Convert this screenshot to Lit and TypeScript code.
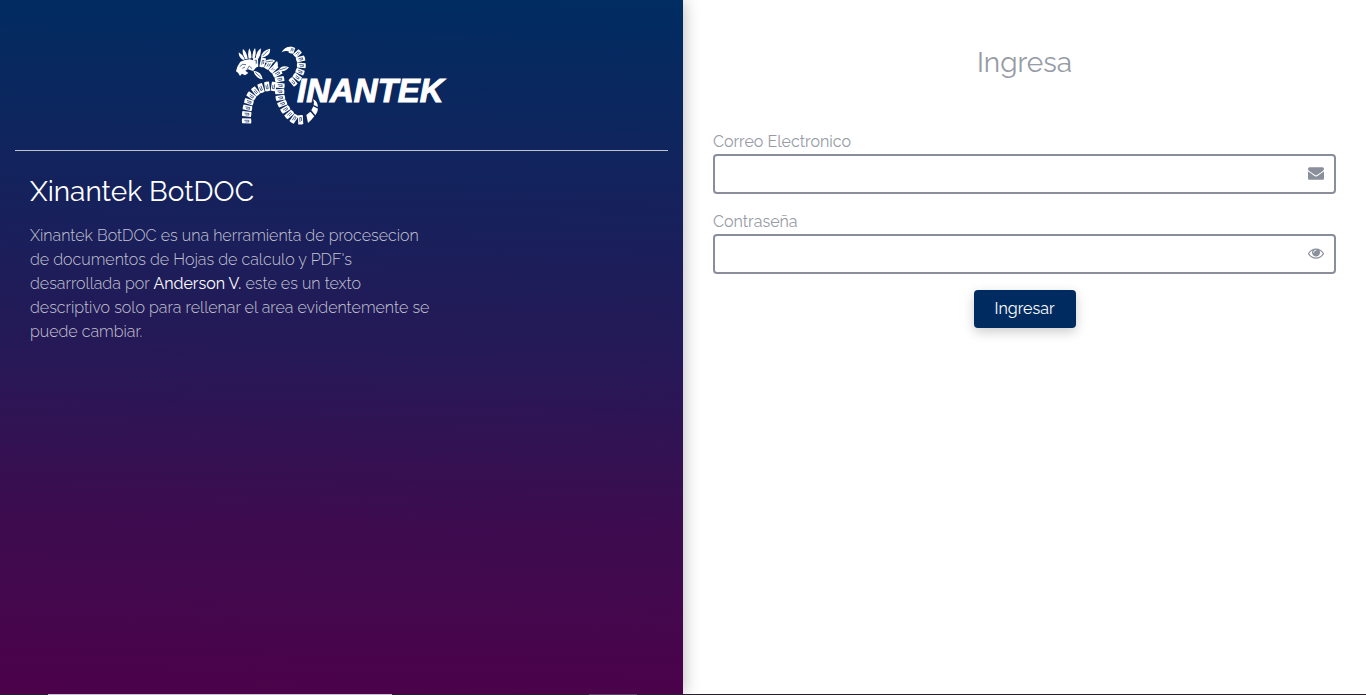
import { LitElement, html, svg, css } from "lit";
import { customElement, state } from "lit/decorators.js";

type Point = [number, number];

/** Spine of each part of the serpent, as points along its middle line. */
const TAIL: Point[] = [[190, 29], [206, 34], [221, 50], [226, 76], [219, 102], [205, 122], [186, 138]];
const NECK: Point[] = [[82, 68], [112, 68], [138, 82], [155, 102], [162, 126], [161, 154], [166, 184], [182, 214], [208, 238], [236, 238]];
const LEG: Point[] = [[150, 140], [126, 139], [97, 148], [76, 168], [66, 196], [62, 224], [62, 256]];

function spline(points: Point[], step = 1): Point[] {
  const out: Point[] = [];
  for (let i = 0; i < points.length - 1; i++) {
    const p0 = points[Math.max(i - 1, 0)];
    const p1 = points[i];
    const p2 = points[i + 1];
    const p3 = points[Math.min(i + 2, points.length - 1)];
    const n = Math.ceil(Math.hypot(p2[0] - p1[0], p2[1] - p1[1]) / step);
    for (let k = 0; k < n; k++) {
      const t = k / n;
      const at = (d: 0 | 1) =>
        0.5 * (2 * p1[d] + (p2[d] - p0[d]) * t + (2 * p0[d] - 5 * p1[d] + 4 * p2[d] - p3[d]) * t * t +
          (3 * p1[d] - p0[d] - 3 * p2[d] + p3[d]) * t * t * t);
      out.push([at(0), at(1)]);
    }
  }
  return out;
}

/** Scales set along a spine; width(t) gives their size from start to end. */
function scales(points: Point[], width: (t: number) => number) {
  const line = spline(points);
  const parts = [];
  for (let i = 9; i < line.length - 2; i += 19) {
    const a = line[Math.max(i - 5, 0)];
    const b = line[Math.min(i + 5, line.length - 1)];
    const angle = (Math.atan2(b[1] - a[1], b[0] - a[0]) * 180) / Math.PI;
    const w = width(i / line.length);
    parts.push(svg`<g transform="translate(${line[i][0].toFixed(1)} ${line[i][1].toFixed(1)}) rotate(${angle.toFixed(1)}) scale(1 ${w.toFixed(2)})">
      <path class="scale" d="M-7-14Q0-16 8-14L7 14Q0 16-8 14Z"/>
      <path class="groove" d="M-2 7V-7H3V4"/>
    </g>`);
  }
  return parts;
}

@customElement("brand-logo")
export class BrandLogo extends LitElement {
  static styles = css`
    :host { display: block; }
    .logo { display: block; width: 212px; height: 81px; overflow: visible; }
    .scale, .plume { fill: #fff; }
    .groove { fill: none; stroke: #08275f; stroke-width: 2; }
    .word {
      font: italic 700 99px "Liberation Sans", Arial, sans-serif;
      fill: #fff; stroke: #fff; stroke-width: 3;
    }
  `;

  render() {
    return html`<svg class="logo" viewBox="30 18 636 243" role="img" aria-label="Xinantek">
      <path class="plume" d="M167 37Q174 20 194 20L193 36Q179 30 167 37Z"/>
      ${scales(TAIL, (t) => Math.min(0.9, 0.6 + t))}
      ${scales(LEG, () => 0.95)}
      ${scales(NECK, () => 0.95)}
      <path class="plume" d="M241 225 253 215 265 229Q256 241 246 249ZM256 211 262 199 276 206Q275 217 268 226ZM263 195Q266 187 261 178 274 182 276 201Z"/>
      <path class="plume" d="M30 94 34 80 43 65 57 60 71 58 87 62 91 82 81 93 66 88 58 92 67 99 57 106 48 101 42 108 36 98Z"/>
      <path class="plume" d="M51 60Q38 53 38 37 51 44 57 58ZM58 57Q47 42 51 27 63 37 65 57ZM68 56Q64 38 70 25 78 39 76 55ZM79 55Q79 34 87 24 92 39 86 55ZM89 56Q90 35 104 25 107 40 97 56Z"/>
      <path class="plume" d="M105 54Q106 31 132 26 136 47 105 54ZM113 66Q127 52 148 62 136 78 113 66ZM157 92Q167 72 189 82 176 99 157 92ZM82 92Q106 94 110 118 88 115 82 92ZM142 87Q141 72 153 63 160 77 149 88Z"/>
      <path class="groove" d="M41 80 50 73 60 74M49 85 57 81M110 48 127 31M119 66 141 63M160 90 182 83M88 97 104 112M63 89 70 78 78 86"/>
      <text class="word" x="213" y="187">INANTEK</text>
    </svg>`;
  }
}

@customElement("app-root")
export class AppRoot extends LitElement {
  @state() private reveal = false;

  static styles = css`
    :host {
      display: grid;
      grid-template-rows: 1fr 1px;
      min-height: 100vh;
      font: 400 16px/24px Raleway, Lato, sans-serif;
      background: #fff;
      color: #969ba5;
    }
    *, *::before, *::after { box-sizing: border-box; }
    .page { display: grid; grid-template-columns: 1fr 1fr; }
    .about {
      padding: 46px 15px 0;
      color: #fff;
      background: linear-gradient(181deg, #002d62, #251957 50%, #3d0c4f 75%, #4c024a);
      box-shadow: 0 0 16px rgba(0, 0, 0, 0.3);
    }
    .brand { display: flex; justify-content: center; padding-bottom: 23px; }
    .rule { margin: 0; border: 0; border-top: 1px solid #bfc3ce; }
    .intro { padding: 24px 15px; }
    .title { margin: 0 0 15px; font-size: 28px; line-height: 34px; font-weight: 400; }
    .text { margin: 0; max-width: 408px; color: #c4c4d2; font-weight: 300; }
    .name { color: #fff; font-weight: 400; }
    .access { padding: 46px 30px 0; display: flex; flex-direction: column; }
    .heading { margin: 0 0 50px; text-align: center; font-size: 28px; line-height: 34px; font-weight: 400; }
    .form { display: flex; flex-direction: column; gap: 16px; }
    .label { display: block; font-weight: 400; }
    .field {
      display: flex;
      align-items: center;
      height: 40px;
      padding: 0 10px 2px 0;
      border: 2px solid #8a8d9b;
      border-radius: 4px;
    }
    .input { flex: 1; min-width: 0; align-self: stretch; padding: 0 10px; border: 0; outline: 0; background: none; font: inherit; color: inherit; }
    .icon { display: block; width: 16px; height: 16px; fill: #8a8f9c; }
    .toggle { padding: 0; border: 0; background: none; cursor: pointer; }
    .submit {
      align-self: center;
      height: 38px;
      padding: 0 21px;
      border: 0;
      border-radius: 4px;
      background: #002b61;
      color: #fff;
      font: inherit;
      box-shadow: 0 4px 12px rgba(0, 0, 0, 0.2);
      cursor: pointer;
    }
    .edge { display: grid; grid-template-columns: 48px 344px 197px 48px 1fr; background: #25202a; z-index: 1; }
    .edge-light { grid-column: 2; background: #c8c4cc; }
    .edge-mid { grid-column: 4; background: #55465a; }
  `;

  render() {
    return html`
      <main class="page">
        <section class="about">
          <div class="brand"><brand-logo></brand-logo></div>
          <hr class="rule" />
          <div class="intro">
            <h1 class="title">Xinantek BotDOC</h1>
            <p class="text">
              Xinantek BotDOC es una herramienta de procesecion de documentos de Hojas de calculo y PDF's
              desarrollada por <strong class="name">Anderson V.</strong> este es un texto descriptivo solo
              para rellenar el area evidentemente se puede cambiar.
            </p>
          </div>
        </section>
        <section class="access">
          <h2 class="heading">Ingresa</h2>
          <form class="form" @submit=${(e: Event) => e.preventDefault()}>
            <div>
              <label class="label" for="email">Correo Electronico</label>
              <div class="field">
                <input class="input" id="email" type="email" />
                <svg class="icon" viewBox="0 0 1792 1792" aria-hidden="true">
                  <path d="M1792 710v794q0 66-47 113t-113 47H160q-66 0-113-47T0 1504V710q44 49 101 87 362 246 497 345 57 42 92.500 65.500t94.500 48 110 24.500h2q51 0 110-24.500t94.500-48 92.500-65.500q170-123 498-345 57-39 100-87zm0-294q0 79-49 151t-122 123q-376 261-468 325-10 7-42.500 30.500t-54 38-52 32.500-57.500 27-50 9h-2q-23 0-50-9t-57.500-27-52-32.500-54-38T639 1015q-91-64-262-182.500T172 690q-62-42-117-115.500T0 438q0-78 41.500-130T160 256h1472q65 0 112.500 47t47.500 113z"/>
                </svg>
              </div>
            </div>
            <div>
              <label class="label" for="password">Contraseña</label>
              <div class="field">
                <input class="input" id="password" type=${this.reveal ? "text" : "password"} />
                <button class="toggle" type="button" aria-label="Mostrar contraseña" @click=${() => (this.reveal = !this.reveal)}>
                  <svg class="icon" viewBox="0 0 1792 1792" aria-hidden="true">
                    <path d="M1664 960q-152-236-381-353 61 104 61 225 0 185-131.500 316.500T896 1280t-316.500-131.500T448 832q0-121 61-225-229 117-381 353 133 205 333.500 326.500T896 1408t434.500-121.500T1664 960zM944 576q0-20-14-34t-34-14q-125 0-214.500 89.500T592 832q0 20 14 34t34 14 34-14 14-34q0-86 61-147t147-61q20 0 34-14t14-34zm848 384q0 34-20 69-140 230-376.500 368.500T896 1536t-499.500-139T20 1029Q0 994 0 960t20-69q140-229 376.500-368T896 384t499.500 139T1772 891q20 35 20 69z"/>
                  </svg>
                </button>
              </div>
            </div>
            <button class="submit" type="submit">Ingresar</button>
          </form>
        </section>
      </main>
      <div class="edge" aria-hidden="true"><span class="edge-light"></span><span class="edge-mid"></span></div>
    `;
  }
}
